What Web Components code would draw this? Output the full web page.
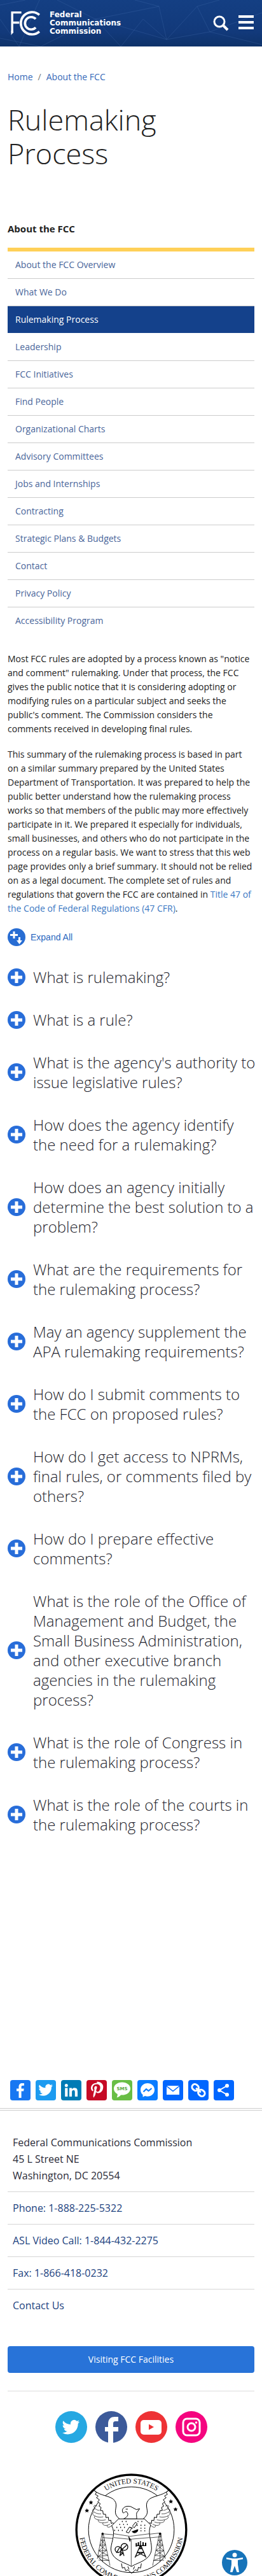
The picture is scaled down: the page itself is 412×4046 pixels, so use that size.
<!DOCTYPE html>
<html lang="en">
<head>
<meta charset="utf-8">
<meta name="viewport" content="width=device-width, initial-scale=1">
<title>Rulemaking Process | Federal Communications Commission</title>
<style>
  body { margin: 0; background: #fff; color: #212121; font: 14px/22px "Open Sans", "Noto Sans", sans-serif; }
  main { padding: 0 12px; }
</style>
</head>
<body>
<site-header></site-header>
<main>
  <bread-crumb></bread-crumb>
  <page-title>Rulemaking Process</page-title>
  <side-nav heading="About the FCC">
    <nav-item>About the FCC Overview</nav-item>
    <nav-item>What We Do</nav-item>
    <nav-item active>Rulemaking Process</nav-item>
    <nav-item>Leadership</nav-item>
    <nav-item>FCC Initiatives</nav-item>
    <nav-item>Find People</nav-item>
    <nav-item>Organizational Charts</nav-item>
    <nav-item>Advisory Committees</nav-item>
    <nav-item>Jobs and Internships</nav-item>
    <nav-item>Contracting</nav-item>
    <nav-item>Strategic Plans &amp; Budgets</nav-item>
    <nav-item>Contact</nav-item>
    <nav-item>Privacy Policy</nav-item>
    <nav-item last>Accessibility Program</nav-item>
  </side-nav>
  <article-body></article-body>
  <faq-list>
    <faq-item>What is rulemaking?</faq-item>
    <faq-item>What is a rule?</faq-item>
    <faq-item>What is the agency's authority to issue legislative rules?</faq-item>
    <faq-item>How does the agency identify the need for a rulemaking?</faq-item>
    <faq-item>How does an agency initially determine the best solution to a problem?</faq-item>
    <faq-item>What are the requirements for the rulemaking process?</faq-item>
    <faq-item>May an agency supplement the APA rulemaking requirements?</faq-item>
    <faq-item>How do I submit comments to the FCC on proposed rules?</faq-item>
    <faq-item>How do I get access to NPRMs, final rules, or comments filed by others?</faq-item>
    <faq-item>How do I prepare effective comments?</faq-item>
    <faq-item>What is the role of the Office of Management and Budget, the Small Business Administration, and other executive branch agencies in the rulemaking process?</faq-item>
    <faq-item>What is the role of Congress in the rulemaking process?</faq-item>
    <faq-item>What is the role of the courts in the rulemaking process?</faq-item>
  </faq-list>
  <share-bar></share-bar>
</main>
<site-footer></site-footer>
<a11y-button></a11y-button>

<script>
function define(name, html) {
  const template = document.createElement('template');
  template.innerHTML = html;
  customElements.define(name, class extends HTMLElement {
    constructor() {
      super();
      this.attachShadow({ mode: 'open' }).append(template.content.cloneNode(true));
      const label = this.shadowRoot.querySelector('[data-heading]');
      if (label) label.textContent = this.getAttribute('heading');
    }
  });
}

const bird = 'M23.6 4.9a9.7 9.7 0 0 1-2.8.8 4.9 4.9 0 0 0 2.1-2.7 9.7 9.7 0 0 1-3.1 1.2 4.9 4.9 0 0 0-8.4 4.5A13.9 13.9 0 0 1 1.3 3.6a4.9 4.9 0 0 0 1.5 6.5 4.9 4.9 0 0 1-2.2-.6 4.9 4.9 0 0 0 3.9 4.9 4.9 4.9 0 0 1-2.2.1 4.9 4.9 0 0 0 4.6 3.4A9.8 9.8 0 0 1 0 19.9a13.9 13.9 0 0 0 7.5 2.2c9.1 0 14.3-7.7 13.9-14.6a10 10 0 0 0 2.2-2.6z';

define('site-header', `
  <style>
    :host { display: block; background: linear-gradient(#143f83, #12397a 70%, #0e3269); }
    header { display: flex; align-items: center; height: 73px; padding: 0 12px 0 17px; box-sizing: border-box; position: relative; overflow: hidden; }
    .net { position: absolute; inset: 0; width: 100%; height: 100%; }
    a { display: flex; align-items: center; gap: 14px; color: #fff; text-decoration: none; font: bold 12px/13px "DejaVu Sans", sans-serif; position: relative; }
    a svg { width: 47px; height: 39px; }
    nav { display: flex; gap: 15px; margin-left: auto; position: relative; }
    button { display: block; padding: 0; border: 0; background: none; }
    button svg { display: block; width: 25px; height: 25px; }
  </style>
  <header>
    <svg class="net" viewBox="0 0 412 73" preserveAspectRatio="none" fill="none" stroke="#5a86c4" stroke-opacity=".22" aria-hidden="true">
      <path d="M0 8 40 0M0 60 64 73 150 30 190 73M90 0 150 30 250 10 212 0M250 10 262 62 225 30 190 73M262 62 310 10 345 0M262 62 330 50 412 70M310 10 330 50 412 20M0 30 30 73M150 30 262 62M62 0 30 73"/>
    </svg>
    <a href="#" aria-label="Federal Communications Commission home">
      <svg viewBox="23 24 139 116" aria-hidden="true" fill="none" stroke="#fff" stroke-width="10">
        <path d="M72 32H29V126M29 79H62"/>
        <path d="M24 118V137L34 126V118Z" fill="#fff" stroke="none"/>
        <path d="M156 43A52 52 0 1 0 156 121" stroke-width="11"/>
        <path d="M139 62A29 29 0 1 0 139 102" stroke-width="11"/>
      </svg>
      <span>Federal<br>Communications<br>Commission</span>
    </a>
    <nav>
      <button type="button" aria-label="Search"><svg viewBox="0 0 25 25" fill="none" stroke="#fff"><circle cx="10" cy="10" r="8" stroke-width="3"/><path d="M16 16l7 7" stroke-width="4"/></svg></button>
      <button type="button" aria-label="Menu"><svg viewBox="0 0 25 25" fill="none" stroke="#fff" stroke-width="4"><path d="M0 2h24M0 11h24M0 20h24"/></svg></button>
    </nav>
  </header>`);

define('bread-crumb', `
  <style>
    :host { display: block; margin-top: 37px; }
    nav { display: flex; gap: 8px; color: #777; }
    a { color: #3568b8; text-decoration: none; }
  </style>
  <nav aria-label="Breadcrumb"><a href="#">Home</a><span>/</span><a href="#">About the FCC</a></nav>`);

define('page-title', `
  <style>
    :host { display: block; margin-top: 29px; padding-right: 100px; }
    h1 { margin: 0; font-size: 45px; line-height: 53px; font-weight: 300; color: #212121; }
  </style>
  <h1><slot></slot></h1>`);

define('side-nav', `
  <style>
    :host { display: block; margin-top: 81px; }
    h2 { margin: 0 0 19px; font-size: 15px; line-height: 22px; font-weight: 700; color: #212121; }
    nav { border-top: 6px solid #ffd058; }
  </style>
  <h2 data-heading></h2>
  <nav aria-label="Section"><slot></slot></nav>`);

define('nav-item', `
  <style>
    :host { display: block; border-bottom: 1px solid #ccc; }
    :host([active]) { background: #14418b; background-clip: padding-box; border-color: transparent; }
    :host([last]) { border-color: transparent; }
    a { display: block; padding: 10px 12px; color: #49659a; text-decoration: none; }
    :host([active]) a { color: #fff; }
  </style>
  <a href="#"><slot></slot></a>`);

define('article-body', `
  <style>
    :host { display: block; margin-top: 27px; }
    p { margin: 0 0 18px; }
    a { color: #3b78c3; text-decoration: none; }
    button { display: flex; align-items: center; gap: 8px; margin-top: 20px; padding: 0; border: 0; background: none; color: #2a68c0; font: 14px/22px "Liberation Sans", sans-serif; }
    svg { width: 28px; height: 28px; }
  </style>
  <p>Most FCC rules are adopted by a process known as "notice and comment" rulemaking. Under that process, the FCC gives the public notice that it is considering adopting or modifying rules on a particular subject and seeks the public's comment. The Commission considers the comments received in developing final rules.</p>
  <p>This summary of the rulemaking process is based in part on a similar summary prepared by the United States Department of Transportation. It was prepared to help the public better understand how the rulemaking process works so that members of the public may more effectively participate in it. We prepared it especially for individuals, small businesses, and others who do not participate in the process on a regular basis. We want to stress that this web page provides only a brief summary. It should not be relied on as a legal document. The complete set of rules and regulations that govern the FCC are contained in <a href="#">Title 47 of the Code of Federal Regulations (47 CFR)</a>.</p>
  <button type="button"><svg viewBox="0 0 28 28" aria-hidden="true"><circle cx="14" cy="14" r="14" fill="#286dd3"/><path d="M10 5v11M4 10.500h12" stroke="#fff" stroke-width="3"/><path d="M17 14h3v5h3l-4.500 6-4.500-6h3z" fill="#fff"/></svg>Expand All</button>`);

define('faq-list', `
  <style>
    :host { display: flex; flex-direction: column; gap: 36px; margin: 33px -4px 0 0; }
  </style>
  <slot></slot>`);

define('faq-item', `
  <style>
    :host { display: block; }
    h3 { margin: 0; font-weight: 300; }
    button { display: grid; grid-template-columns: 28px 1fr; align-items: center; gap: 12px; width: 100%; padding: 0; border: 0; background: none; text-align: left; color: #1f1f2e; font: inherit; font-size: 24px; line-height: 31px; }
    svg { display: block; width: 28px; height: 28px; }
  </style>
  <h3><button type="button" aria-expanded="false"><svg viewBox="0 0 28 28" aria-hidden="true"><circle cx="14" cy="14" r="14" fill="#286dd9"/><path d="M14 5v18M5 14h18" stroke="#fff" stroke-width="5"/></svg><span><slot></slot></span></button></h3>`);

define('share-bar', `
  <style>
    :host { display: flex; gap: 8px; margin-top: 386px; padding: 0 4px 12px; }
    a { display: block; border-radius: 4px; overflow: hidden; }
    svg { display: block; width: 32px; height: 32px; }
    text { font: bold 7px "DejaVu Sans", sans-serif; }
  </style>
  <a href="#" aria-label="Facebook" style="background:#1877f2"><svg viewBox="0 0 32 32"><path fill="#fff" d="M13.500 28V17.500H10v-4h3.500v-3c0-3.600 2.200-5.600 5.300-5.600 1.500 0 2.800.1 3.100.2v3.700h-2.200c-1.700 0-2.100.8-2.100 2v2.700h4.100l-.6 4h-3.500V28z"/></svg></a>
  <a href="#" aria-label="Twitter" style="background:#1d9bf0"><svg viewBox="0 0 32 32"><path fill="#fff" transform="translate(4.800 4) scale(.94)" d="${bird}"/></svg></a>
  <a href="#" aria-label="LinkedIn" style="background:#007bb5"><svg viewBox="0 0 32 32" fill="#fff"><path d="M6.200 12.600h4.200v13.500H6.200zM13 12.600h4v1.800c.6-1 1.900-2.200 4-2.200 4.200 0 5 2.800 5 6.400v7.500h-4.200v-6.600c0-1.600 0-3.600-2.200-3.600s-2.500 1.700-2.500 3.500v6.700H13z"/><circle cx="8.300" cy="8.400" r="2.500"/></svg></a>
  <a href="#" aria-label="Pinterest" style="background:#c60a25"><svg viewBox="0 0 32 32"><path fill="#fff" d="M16.500 4.500c-6.300 0-9.500 4.300-9.500 8 0 2.300.9 4.200 2.700 5 .3.100.6 0 .7-.3l.3-1.100c.1-.4 0-.5-.2-.8-.5-.6-.9-1.400-.9-2.600 0-3.300 2.500-6.200 6.500-6.200 3.600 0 5.500 2.200 5.500 5 0 3.800-1.700 7-4.200 7-1.400 0-2.400-1.100-2.100-2.500.4-1.700 1.200-3.400 1.200-4.600 0-1.100-.6-2-1.800-2-1.400 0-2.500 1.500-2.500 3.400 0 1.300.4 2.100.4 2.100l-1.700 7.300c-.5 2.200-.1 4.800 0 5.100l.4.100c.2-.2 2-2.500 2.700-4.700l1-4c.5 1 2 1.800 3.500 1.800 4.700 0 7.800-4.200 7.800-9.900 0-4.300-3.700-8.100-9.800-8.100z"/></svg></a>
  <a href="#" aria-label="SMS" style="background:#69be45"><svg viewBox="0 0 32 32"><path fill="#fff" d="M16 3.500c7.400 0 13 4.400 13 10S23.400 23.600 16 23.600l-2-.1c-1.500 2-3.800 3.500-6.500 3.900 1-1.500 1.500-3.500 1.200-5.400C5.200 20.300 3 17.200 3 13.500c0-5.600 5.600-10 13-10z"/><text x="16" y="16" text-anchor="middle" fill="#58a83a">SMS</text></svg></a>
  <a href="#" aria-label="Messenger" style="background:#0a7cff"><svg viewBox="0 0 32 32"><path fill="#fff" d="M16 5C9.800 5 5 9.500 5 15.400c0 3.100 1.300 5.800 3.500 7.700l.1 3.600 3.300-1.600c1.300.4 2.600.6 4.100.6 6.200 0 11-4.500 11-10.300S22.200 5 16 5z"/><path d="m9.500 18.500 4.500-4.300 3.500 2.800 5-4" fill="none" stroke="#0a7cff" stroke-width="2.200"/></svg></a>
  <a href="#" aria-label="Email" style="background:#0166ff"><svg viewBox="0 0 32 32"><path fill="#fff" d="M6 9h20v14H6z"/><path d="m6 9.500 10 8 10-8" fill="none" stroke="#0166ff" stroke-width="1.500"/></svg></a>
  <a href="#" aria-label="Copy link" style="background:#0166ff"><svg viewBox="0 0 32 32" fill="none" stroke="#fff" stroke-width="3"><g transform="rotate(42 16 16)"><rect x="4" y="11.500" width="11" height="9" rx="4.500"/><rect x="17" y="11.500" width="11" height="9" rx="4.500"/><path d="M11 16h10"/></g></svg></a>
  <a href="#" aria-label="Share" style="background:#0166ff"><svg viewBox="0 0 32 32" fill="#fff"><path d="M21 9 9 16l12 7" fill="none" stroke="#fff" stroke-width="2"/><circle cx="21" cy="9" r="3"/><circle cx="9" cy="16" r="3"/><circle cx="21" cy="23" r="3"/></svg></a>`);

define('social-links', `
  <style>
    :host { display: flex; justify-content: center; gap: 13px; margin-top: 31px; }
    a, svg { display: block; }
    svg { width: 50px; height: 50px; }
  </style>
  <a href="#" aria-label="Twitter"><svg viewBox="0 0 50 50"><circle cx="25" cy="25" r="25" fill="#26a8e2"/><path fill="#fff" transform="translate(11 11) scale(1.150)" d="${bird}"/></svg></a>
  <a href="#" aria-label="Facebook"><svg viewBox="0 0 50 50"><circle cx="25" cy="25" r="25" fill="#3c5a9a"/><path fill="#fff" d="M20 50V32h-5v-7h5v-5c0-8 5-11 10-11h6v7h-4c-3 0-4 1-4 4v5h8v7h-8v18z"/></svg></a>
  <a href="#" aria-label="YouTube"><svg viewBox="0 0 50 50"><circle cx="25" cy="25" r="25" fill="#ee3235"/><rect x="8" y="14" width="33" height="23" rx="5" fill="#fff"/><path d="M21 20.500v9l8-4.500z" fill="#ee3235"/></svg></a>
  <a href="#" aria-label="Instagram"><svg viewBox="0 0 50 50" fill="none" stroke="#fff"><circle cx="25" cy="25" r="25" fill="#f5057f" stroke="none"/><rect x="12" y="12" width="26" height="26" rx="6" stroke-width="3"/><circle cx="25" cy="25" r="6" stroke-width="3"/><circle cx="32.500" cy="18" r="1.800" fill="#fff" stroke="none"/></svg></a>`);

/* One wing, drawn on the left and mirrored for the right side of the seal. */
const wing = `
  <path d="M440 510C470 540 520 535 538 560S530 610 548 633L560 646 540 678 530 664 522 668 520 652 510 654 508 638 497 640 495 624 484 624 482 608 470 606 474 592 464 586 470 574 458 566 466 556 452 546 460 538 446 530 452 522Z" fill="#fff"/>
  <path d="M456 586C428 572 440 604 466 606M446 600C418 598 446 626 474 622M440 616C420 622 452 644 484 636M446 632C430 644 466 658 496 650M462 650C452 662 484 670 508 660M484 664C474 676 500 682 516 670M504 676C496 688 518 688 524 676" stroke-width="2"/>
  <path d="M478 716 456 834M484 716 516 866M481 716V850M472 746H490M468 770 495 768M463 796 500 794M460 822 506 818M462 840 512 842M474 746 495 768 463 796 506 818M490 746 468 770 500 794 460 822 512 842" stroke-width="2"/>
  <circle cx="481" cy="716" r="4" fill="#000"/>`;

define('fcc-seal', `
  <style>
    :host { display: block; width: 177px; margin: 48px auto 0; }
    svg { display: block; width: 100%; }
    text { font: 34px "Liberation Serif", serif; }
  </style>
  <svg viewBox="351 432 531 486" role="img" aria-label="Seal of the Federal Communications Commission" fill="none" stroke="#000" stroke-width="3">
    <defs>
      <path id="top" d="M398 697A218 218 0 0 1 835 697"/>
      <path id="bottom" d="M382 624A246 246 0 1 0 851 624"/>
      <path id="star" d="M0-11 3-4 10-4 5 2 7 9 0 5-7 9-5 2-10-4-3-4Z" fill="#000" stroke="none"/>
    </defs>
    <circle cx="616.500" cy="697" r="259" stroke-width="10" fill="#fff"/>
    <circle cx="616.500" cy="697" r="202"/>
    <g>${wing}</g>
    <g transform="translate(1233) scale(-1 1)">${wing}</g>
    <path d="M574 604C580 586 600 584 614 588L640 602 656 598 646 612C638 618 642 632 642 646H580C600 636 606 624 594 612 584 610 584 622 576 616Z" fill="#fff"/>
    <path d="M590 600h10"/>
    <path d="M480 716 610 728 756 712V730L612 744 480 734" stroke-width="2"/>
    <path d="M556 646H678L708 674C692 716 712 746 712 786 710 840 650 850 617 870 584 850 522 840 520 786 524 746 544 716 524 678Z" fill="#fff"/>
    <path d="M534 716 610 728 702 716M534 734 610 742 702 734M616 742V868" stroke-width="2"/>
    <path d="M604 730 612 742 610 752Z" fill="#000"/>
    <g stroke-width="5" stroke-dasharray="4 14"><path d="M572 658H604M646 658H670M560 672H606M642 676H690M546 686H596M660 690H690M536 700H590M660 702H694"/></g>
    <path d="M592 708 604 712 618 690 608 684ZM622 680 636 662 644 668 630 688ZM612 686 624 690" stroke-width="3"/>
    <path d="M620 706A16 16 0 0 0 648 696Z" fill="#000"/>
    <g stroke-width="4"><circle cx="554" cy="790" r="14"/><circle cx="584" cy="778" r="16"/><path d="M572 786 562 820M572 786 582 820M566 806H578M562 820 578 806M546 806 562 780M574 788 594 770"/></g>
    <g stroke-width="4"><path d="M660 768 634 828M660 768 686 828M652 786H668M646 804H674M638 822 674 804M682 822 646 804M640 772H684M660 750V784"/><path d="M640 760v16M650 756v16M672 756v16M684 758v16" stroke-width="6"/></g>
    <path d="M570 856 574 878 584 874 590 890 600 886 618 902 636 886 646 890 650 874 660 878 664 856M600 870 606 884M632 870 626 884"/>
    <use href="#star" x="426" y="569"/><use href="#star" x="407" y="607"/>
    <use href="#star" x="803" y="564"/><use href="#star" x="825" y="601"/>
    <g fill="#111" stroke="none">
      <text text-anchor="middle"><textPath href="#top" startOffset="50%">UNITED STATES</textPath></text>
      <text text-anchor="middle"><textPath href="#bottom" startOffset="50%">FEDERAL COMMUNICATIONS COMMISSION</textPath></text>
    </g>
  </svg>`);

define('site-footer', `
  <style>
    :host { display: block; border-top: 4px double #ccc; font-size: 16px; line-height: 26px; }
    footer { padding: 37px 12px 0; }
    address { font-style: normal; padding: 0 8px 12px; color: #2b2b38; }
    ul { list-style: none; margin: 0 0 39px; padding: 0; }
    li { border-top: 1px solid #d5d5d5; padding: 12px 8px; }
    li a { color: #1d4380; text-decoration: none; }
    .visit { display: block; border-radius: 4px; background: #2873d8; color: #fff; text-align: center; text-decoration: none; font-size: 14px; line-height: 22px; padding: 10px; }
    hr { margin: 28px 0 0; border: 0; border-top: 1px solid #ddd; }
  </style>
  <footer>
    <address>Federal Communications Commission<br>45 L Street NE<br>Washington, DC 20554</address>
    <ul>
      <li><a href="#">Phone: 1-888-225-5322</a></li>
      <li><a href="#">ASL Video Call: 1-844-432-2275</a></li>
      <li><a href="#">Fax: 1-866-418-0232</a></li>
      <li><a href="#">Contact Us</a></li>
    </ul>
    <a class="visit" href="#">Visiting FCC Facilities</a>
    <hr>
    <social-links></social-links>
    <fcc-seal></fcc-seal>
  </footer>`);

define('a11y-button', `
  <style>
    :host { position: fixed; right: 23px; bottom: 1px; }
    button { display: block; padding: 0; border: 0; background: none; }
    svg { display: block; width: 40px; height: 40px; }
  </style>
  <button type="button" aria-label="Accessibility options"><svg viewBox="0 0 40 40"><circle cx="20" cy="20" r="20" fill="#1673b9"/><circle cx="20" cy="8" r="3.500" fill="#fff"/><path fill="#fff" d="M7 12l10 1.500h6L33 12v2.500L25 16v7l2 12h-3.500L20 25l-3.500 10H13l2-12v-7l-8-1.500z"/></svg></button>`);
</script>
</body>
</html>
